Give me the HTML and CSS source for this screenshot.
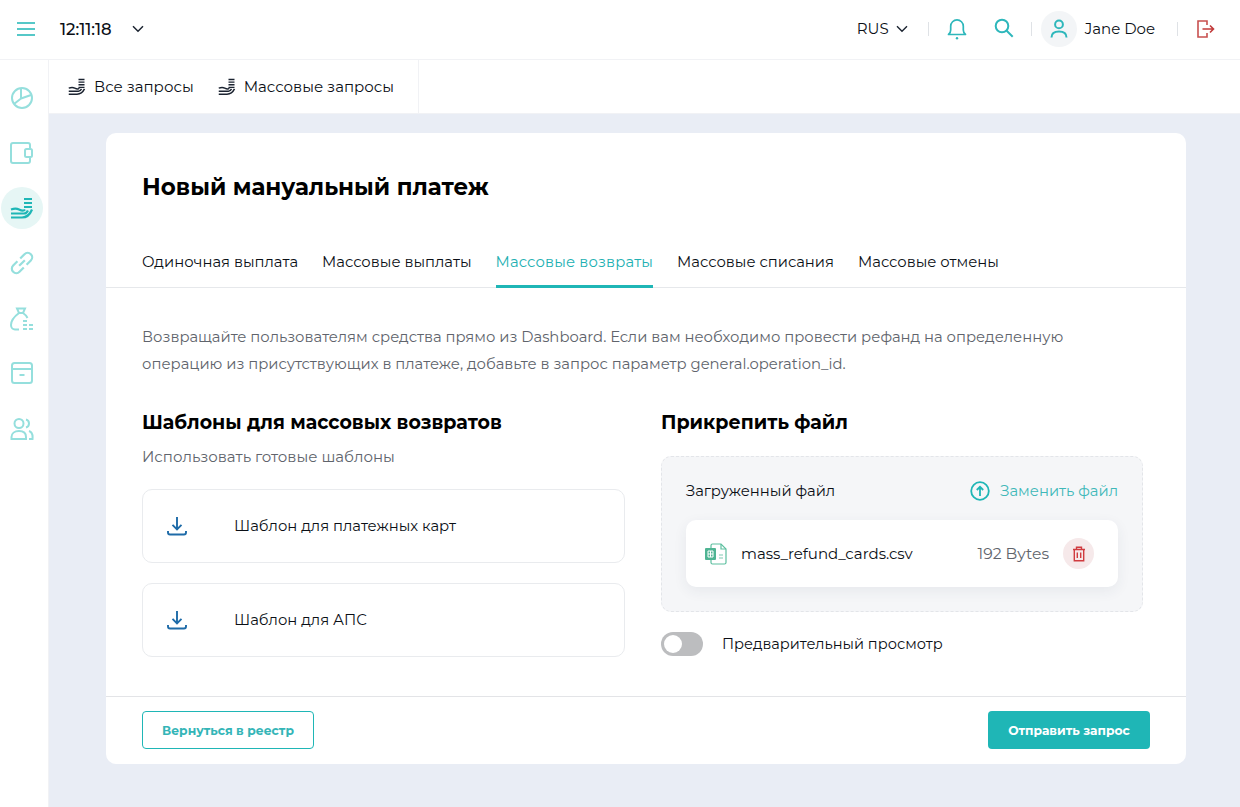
FILE: index.html
```html
<!DOCTYPE html>
<html>
<head>
    <meta http-equiv="Content-Type" content="text/html; charset=utf-8" />
    <title>Новый мануальный платеж</title>
    <link rel="stylesheet" href="styles.css">
</head>
<body>
<div class="topbar">
  <div class="topbar-left">
    <svg class="burger" width="18" height="14" viewBox="0 0 18 14"><path d="M0 1h18M0 7h18M0 13h18" stroke="#1fb6b6" stroke-width="1.6"/></svg>
    <span class="clock">12:11:18</span>
    <svg class="chev" width="12" height="8" viewBox="0 0 12 8"><path d="M1 1.2l5 5 5-5" fill="none" stroke="#1b2330" stroke-width="1.5"/></svg>
  </div>
  <div class="topbar-right">
    <span class="lang">RUS</span>
    <svg class="chev lang-chev" width="12" height="8" viewBox="0 0 12 8"><path d="M1 1.2l5 5 5-5" fill="none" stroke="#1b2330" stroke-width="1.4"/></svg>
    <span class="sep sep-a"></span>
    <svg class="bell" width="20" height="22" viewBox="0 0 20 22"><path d="M1.5 16.5c1.6-1.3 2.2-2.6 2.2-4.6V8.2a6.3 6.3 0 0 1 12.6 0v3.7c0 2 .6 3.3 2.2 4.6z" fill="none" stroke="#2db7bb" stroke-width="1.7" stroke-linejoin="round"/><circle cx="10" cy="20.3" r="1.2" fill="#2db7bb"/></svg>
    <svg class="search" width="20" height="20" viewBox="0 0 20 20"><circle cx="8" cy="8" r="6.3" fill="none" stroke="#2db7bb" stroke-width="2"/><path d="M12.7 12.7l6 6" stroke="#2db7bb" stroke-width="2"/></svg>
    <span class="sep sep-b"></span>
    <span class="avatar"><svg width="18" height="20" viewBox="0 0 18 20"><circle cx="9" cy="5.4" r="3.9" fill="none" stroke="#2db7bb" stroke-width="2"/><path d="M1.5 18.5c0-4 3-6 7.500-6s7.500 2 7.500 6" fill="none" stroke="#2db7bb" stroke-width="2"/></svg></span>
    <span class="username">Jane Doe</span>
    <span class="sep sep-c"></span>
    <svg class="logout" width="18" height="18" viewBox="0 0 18 18"><path d="M10 5V1H1v16h9v-4" fill="none" stroke="#c8504f" stroke-width="1.600"/><path d="M5.500 9h11M13 5.500L16.500 9 13 12.500" fill="none" stroke="#c23b3b" stroke-width="1.600"/></svg>
  </div>
</div>

<div class="layout">
  <div class="sidebar">
    <a class="side-item"><svg width="24" height="24" viewBox="0 0 24 24"><circle cx="12" cy="12" r="10" fill="none" stroke="#95dfdd" stroke-width="2"/><path d="M11 2v10.500l10-3.500M11 12.500L4 18" fill="none" stroke="#95dfdd" stroke-width="2"/></svg></a>
    <a class="side-item"><svg width="24" height="22" viewBox="0 0 24 22"><path d="M20 6V3a2 2 0 0 0-2-2H3a2 2 0 0 0-2 2v16a2 2 0 0 0 2 2h15a2 2 0 0 0 2-2v-3" fill="none" stroke="#95dfdd" stroke-width="2"/><rect x="15" y="7" width="7" height="8" rx="1.500" fill="none" stroke="#95dfdd" stroke-width="2"/></svg></a>
    <a class="side-item side-item-active"><svg width="24" height="24" viewBox="0 0 24 24"><path d="M14 3h8M14 7h8M14 11h8" stroke="#1fb6b6" stroke-width="2.200"/><path d="M1 13.500c3-1 6-1 8 0s5 1.500 6 0M1 17.500h13c2 0 3-1 4-3M1 21.500h11c5 0 8-3 10-8" fill="none" stroke="#1fb6b6" stroke-width="2.200"/></svg></a>
    <a class="side-item"><svg width="24" height="24" viewBox="0 0 24 24"><g transform="rotate(-45 12 12)" fill="none" stroke="#95dfdd" stroke-width="2.200"><path d="M10 7.500H4a4.500 4.500 0 0 0 0 9h6"/><path d="M14 7.500h6a4.500 4.500 0 0 1 0 9h-6"/><path d="M8 12h8"/></g></svg></a>
    <a class="side-item side-item-low"><svg width="24" height="24" viewBox="0 0 24 24"><g fill="none" stroke="#95dfdd" stroke-width="2"><path d="M7 1.500h8l-2 4.500H9z"/><path d="M9 6C5 9 1 14 1 18c0 3 2 4.500 4 4.500h4"/><path d="M13 6c2 1.300 3.500 3 4.500 5"/></g><path d="M13 14h4M13 18h4M13 22h4M19 18h4M19 22h4" stroke="#95dfdd" stroke-width="2"/></svg></a>
    <a class="side-item"><svg width="24" height="24" viewBox="0 0 24 24"><rect x="2" y="2" width="20" height="20" rx="2.500" fill="none" stroke="#95dfdd" stroke-width="2"/><path d="M2 8h20M9.500 14h5" stroke="#95dfdd" stroke-width="2"/></svg></a>
    <a class="side-item side-item-low"><svg width="24" height="24" viewBox="0 0 24 24"><circle cx="9" cy="6.500" r="4.500" fill="none" stroke="#95dfdd" stroke-width="2"/><path d="M1.500 22v-2c0-3.500 3-6 7.500-6s7 2.500 7 6v2z" fill="none" stroke="#95dfdd" stroke-width="2"/><path d="M16 2.500c2 .5 3 2 3 4s-1 3.500-3 4M19 14c2.500.8 4 3 3.500 8H19" fill="none" stroke="#95dfdd" stroke-width="2"/></svg></a>
  </div>

  <div class="main">
    <div class="subnav">
      <div class="subnav-links">
        <a class="subnav-item"><svg width="18" height="18" viewBox="0 0 24 24"><path d="M14 2h8M14 5.500h8M14 9h8M14 12.500h8" stroke="#1b2330" stroke-width="1.800"/><path d="M1 13.500c3-1 6-1 8 0s5 1.500 6 0M1 17.500h13c2 0 3-1 4-3M1 21.500h11c5 0 8-3 10-7" fill="none" stroke="#1b2330" stroke-width="2"/></svg>Все запросы</a>
        <a class="subnav-item"><svg width="18" height="18" viewBox="0 0 24 24"><path d="M14 2h8M14 5.500h8M14 9h8M14 12.500h8" stroke="#1b2330" stroke-width="1.800"/><path d="M1 13.500c3-1 6-1 8 0s5 1.500 6 0M1 17.500h13c2 0 3-1 4-3M1 21.500h11c5 0 8-3 10-7" fill="none" stroke="#1b2330" stroke-width="2"/></svg>Массовые запросы</a>
      </div>
    </div>

    <div class="content">
      <div class="card">
        <h1 class="card-title">Новый мануальный платеж</h1>
        <div class="tabs">
          <a class="tab">Одиночная выплата</a>
          <a class="tab">Массовые выплаты</a>
          <a class="tab tab-active">Массовые возвраты</a>
          <a class="tab">Массовые списания</a>
          <a class="tab">Массовые отмены</a>
        </div>
        <div class="card-body">
          <p class="intro">Возвращайте пользователям средства прямо из Dashboard. Если вам необходимо провести рефанд на определенную операцию из присутствующих в платеже, добавьте в запрос параметр general.operation_id.</p>
          <div class="columns">
            <div class="col-left">
              <h2 class="section-title">Шаблоны для массовых возвратов</h2>
              <div class="section-sub">Использовать готовые шаблоны</div>
              <a class="template">
                <svg width="20" height="20" viewBox="0 0 20 20"><path d="M10 1v12M5.500 8.800L10 13.300l4.500-4.500M1 15v1.500A2 2 0 0 0 3 18.500h14a2 2 0 0 0 2-2V15" fill="none" stroke="#1e6ba8" stroke-width="1.900"/></svg>
                Шаблон для платежных карт
              </a>
              <a class="template">
                <svg width="20" height="20" viewBox="0 0 20 20"><path d="M10 1v12M5.500 8.800L10 13.300l4.500-4.500M1 15v1.500A2 2 0 0 0 3 18.500h14a2 2 0 0 0 2-2V15" fill="none" stroke="#1e6ba8" stroke-width="1.900"/></svg>
                Шаблон для АПС
              </a>
            </div>
            <div class="col-right">
              <h2 class="section-title">Прикрепить файл</h2>
              <div class="dropzone">
                <div class="dropzone-head">
                  <span>Загруженный файл</span>
                  <a class="replace"><svg width="20" height="20" viewBox="0 0 20 20"><circle cx="10" cy="10" r="8.800" fill="none" stroke="#1fb6b6" stroke-width="1.800"/><path d="M10 15V6M6.800 9L10 5.800 13.200 9" fill="none" stroke="#1fb6b6" stroke-width="1.800"/></svg>Заменить файл</a>
                </div>
                <div class="file-row">
                  <svg class="file-icon" width="22" height="22" viewBox="0 0 22 22"><path d="M6 5V2.500A1.500 1.500 0 0 1 7.500 1H16l5 5v13.500a1.500 1.500 0 0 1-1.500 1.500h-12A1.500 1.500 0 0 1 6 19.500V17" fill="none" stroke="#5cbf9f" stroke-width="1.200"/><path d="M16 1v5h5" fill="none" stroke="#5cbf9f" stroke-width="1.200"/><rect x="0" y="5" width="11" height="12" rx="1" fill="#4fb493"/><path d="M3 8h5v6H3zM5.500 8v6M3 11h5" fill="none" stroke="#fff" stroke-width="1"/><path d="M14 12h4M14 15h4" stroke="#a9dccb" stroke-width="1.500"/></svg>
                  <span class="file-name">mass_refund_cards.csv</span>
                  <span class="file-size">192 Bytes</span>
                  <a class="file-delete"><svg width="14" height="16" viewBox="0 0 14 16"><path d="M1 3.500h12M4.500 3.500V1.300h5v2.200M2.300 3.500v11.300h9.400V3.500M5.300 6.500v5.500M8.700 6.500v5.500" fill="none" stroke="#d03b3f" stroke-width="1.400"/></svg></a>
                </div>
              </div>
              <div class="preview">
                <span class="toggle"><span class="toggle-knob"></span></span>
                <span>Предварительный просмотр</span>
              </div>
            </div>
          </div>
        </div>
        <div class="card-footer">
          <a class="btn btn-outline">Вернуться в реестр</a>
          <a class="btn btn-primary">Отправить запрос</a>
        </div>
      </div>
    </div>
  </div>
</div>
</body>
</html>
```

FILE: styles.css
```css
* {
    box-sizing: border-box;
}

html, body {
    height: 100%;
}

body {
    margin: 0;
    overflow: hidden;
    background-color: #fff;
    color: #0b0f16;
    font-family: "Montserrat", "Inter", "Liberation Sans", sans-serif;
    font-size: 14.8px;
}

.topbar {
    height: 60px;
    display: flex;
    justify-content: space-between;
    align-items: center;
    padding: 0 25px 2px 17px;
    border-bottom: 1px solid #f1f2f5;
}

.topbar-left,
.topbar-right {
    display: flex;
    align-items: center;
}

.clock {
    margin-left: 25px;
    font-size: 16.4px;
    font-weight: 500;
}

.chev {
    margin-left: 20px;
}

.lang,
.username {
    font-size: 15px;
}

.lang-chev {
    margin-left: 7px;
}

.sep {
    width: 1px;
    height: 14px;
    background-color: #dfe2e6;
}

.sep-a {
    margin: 0 18px 0 20px;
}

.bell {
    margin-right: 27px;
}

.search {
    margin-top: -2px;
}

.sep-b {
    margin: 0 9px 0 17px;
}

.avatar {
    width: 36px;
    height: 36px;
    border-radius: 50%;
    background-color: #f3f5f7;
    display: flex;
    justify-content: center;
    align-items: center;
}

.username {
    margin-left: 8px;
}

.sep-c {
    margin: 0 19px 0 22px;
}

.layout {
    display: flex;
    height: 747px;
}

.sidebar {
    width: 49px;
    flex-shrink: 0;
    padding-top: 11px;
    display: flex;
    flex-direction: column;
    border-right: 1px solid #f1f2f5;
}

.side-item {
    width: 42px;
    height: 42px;
    margin: 6px 0 7px 1px;
    border-radius: 50%;
    display: flex;
    justify-content: center;
    align-items: center;
}

.side-item-low svg {
    margin-top: 2px;
}

.side-item-active {
    background-color: #e6f6f5;
}

.main {
    flex: 1;
    display: flex;
    flex-direction: column;
    min-width: 0;
    background-color: #e9edf5;
}

.subnav {
    height: 54px;
    flex-shrink: 0;
    background-color: #fff;
    border-bottom: 1px solid #f1f2f5;
}

.subnav-links {
    width: 370px;
    height: 100%;
    display: flex;
    align-items: center;
    gap: 24px;
    padding-left: 19px;
    font-size: 15px;
    border-right: 1px solid #f1f2f5;
}

.subnav-item {
    display: flex;
    align-items: center;
    gap: 8px;
}

.content {
    padding: 19px 54px 0 57px;
}

.card {
    height: 631px;
    background-color: #fff;
    border-radius: 10px;
    display: flex;
    flex-direction: column;
}

.card-title {
    margin: 0;
    padding: 38px 36px 0;
    font-size: 23px;
    line-height: 32px;
    font-weight: 700;
    color: #000;
}

.tabs {
    display: flex;
    gap: 24px;
    margin-top: 40px;
    padding: 0 36px;
    height: 45px;
    border-bottom: 1px solid #e6e8eb;
}

.tab {
    height: 45px;
    line-height: 38px;
    flex-shrink: 0;
}

.tab-active {
    color: #22b0b2;
    letter-spacing: 0.15px;
    border-bottom: 3px solid #1fb6b6;
}

.card-body {
    flex: 1;
    padding: 36px 43px 0 36px;
}

.intro {
    margin: 0;
    color: #60646c;
    line-height: 27px;
}

.columns {
    display: flex;
    gap: 36px;
    margin-top: 30px;
}

.col-left {
    width: 483px;
}

.col-right {
    flex: 1;
}

.section-title {
    margin: 0;
    font-size: 19px;
    line-height: 30px;
    font-weight: 700;
    color: #000;
}

.section-sub {
    margin: 9px 0 22px;
    line-height: 20px;
    font-size: 15px;
    color: #60646c;
}

.template {
    height: 74px;
    margin-bottom: 20px;
    padding: 0 0 1px 24px;
    display: flex;
    align-items: center;
    gap: 47px;
    border: 1px solid #e9ebee;
    border-radius: 10px;
}

.dropzone {
    margin-top: 18px;
    height: 156px;
    padding: 24px 24px 0;
    background-color: #f5f6f8;
    border: 1px dashed #e3e5e9;
    border-radius: 10px;
}

.dropzone-head {
    display: flex;
    justify-content: space-between;
    align-items: center;
    height: 20px;
}

.replace {
    display: flex;
    align-items: center;
    gap: 10px;
    color: #3fb8b9;
}

.file-row {
    height: 67px;
    margin-top: 19px;
    padding: 0 24px 0 19px;
    display: flex;
    align-items: center;
    background-color: #fff;
    border-radius: 10px;
    box-shadow: 0 4px 14px rgba(40, 50, 80, 0.07);
}

.file-name {
    flex: 1;
    margin-left: 14px;
    font-size: 15px;
}

.file-size {
    font-size: 15.6px;
    color: #60646c;
}

.file-delete {
    width: 31px;
    height: 31px;
    margin-left: 14px;
    border-radius: 50%;
    background-color: #f6e9ea;
    display: flex;
    justify-content: center;
    align-items: center;
}

.preview {
    display: flex;
    align-items: center;
    gap: 19px;
    margin-top: 20px;
    font-size: 14.6px;
}

.toggle {
    width: 42px;
    height: 24px;
    padding: 3px;
    border-radius: 12px;
    background-color: #bcbdbf;
}

.toggle-knob {
    display: block;
    width: 18px;
    height: 18px;
    border-radius: 50%;
    background-color: #fff;
}

.card-footer {
    height: 68px;
    padding: 14px 36px 0;
    display: flex;
    justify-content: space-between;
    align-items: flex-start;
    border-top: 1px solid #e3e4e7;
}

.btn {
    height: 38px;
    display: flex;
    justify-content: center;
    align-items: center;
    border-radius: 4px;
    font-size: 12.3px;
    font-weight: 700;
}

.btn-outline {
    width: 172px;
    color: #34b5b7;
    border: 1px solid #1fb6b6;
}

.btn-primary {
    width: 162px;
    color: #fff;
    background-color: #1fb6b6;
}
```
